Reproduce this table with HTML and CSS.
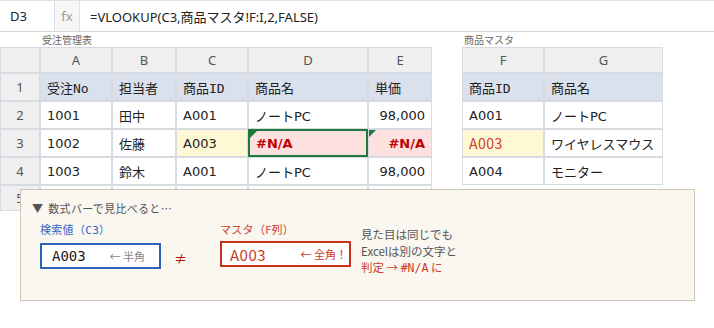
FILE: index.html
```html
<!DOCTYPE html>
<html lang="ja">
<head>
<meta charset="utf-8">
<link rel="stylesheet" href="styles.css">
</head>
<body>
<div class="formula-bar">
  <div class="namebox">D3</div>
  <div class="fx">fx</div>
  <div class="formula">=VLOOKUP(C3,商品マスタ!F:I,2,FALSE)</div>
</div>
<div class="sheets">
  <div class="sheet">
    <div class="caption caption-left">受注管理表</div>
    <div class="grid grid-left">
      <div class="cell corner"></div>
      <div class="cell colhdr">A</div>
      <div class="cell colhdr">B</div>
      <div class="cell colhdr">C</div>
      <div class="cell colhdr">D</div>
      <div class="cell colhdr">E</div>

      <div class="cell rowhdr">1</div>
      <div class="cell head"><span class="mono">受注No</span></div>
      <div class="cell head">担当者</div>
      <div class="cell head"><span class="mono">商品ID</span></div>
      <div class="cell head">商品名</div>
      <div class="cell head">単価</div>

      <div class="cell rowhdr">2</div>
      <div class="cell">1001</div>
      <div class="cell">田中</div>
      <div class="cell">A001</div>
      <div class="cell">ノートPC</div>
      <div class="cell num">98,000</div>

      <div class="cell rowhdr">3</div>
      <div class="cell">1002</div>
      <div class="cell">佐藤</div>
      <div class="cell lookup">A003</div>
      <div class="cell error active">#N/A<span class="sel"></span><span class="tri tri-big"></span></div>
      <div class="cell error num">#N/A<span class="tri"></span></div>

      <div class="cell rowhdr">4</div>
      <div class="cell">1003</div>
      <div class="cell">鈴木</div>
      <div class="cell">A001</div>
      <div class="cell">ノートPC</div>
      <div class="cell num">98,000</div>

      <div class="cell rowhdr">5</div>
      <div class="cell"></div>
      <div class="cell"></div>
      <div class="cell"></div>
      <div class="cell"></div>
      <div class="cell"></div>
    </div>
  </div>
  <div class="sheet sheet-right">
    <div class="caption caption-right">商品マスタ</div>
    <div class="grid grid-right">
      <div class="cell colhdr">F</div>
      <div class="cell colhdr">G</div>

      <div class="cell head"><span class="mono">商品ID</span></div>
      <div class="cell head">商品名</div>

      <div class="cell">A001</div>
      <div class="cell">ノートPC</div>

      <div class="cell lookup fullwidth">A003</div>
      <div class="cell">ワイヤレスマウス</div>

      <div class="cell">A004</div>
      <div class="cell">モニター</div>
    </div>
  </div>
</div>

<div class="note">
  <div class="note-title"><span class="arrow">▼</span>数式バーで見比べると…</div>
  <div class="compare">
    <div class="side side-half">
      <div class="side-label label-blue">検索値（<span class="mono">C3</span>）</div>
      <div class="side-box box-blue">
        <span class="val val-half">A003</span>
        <span class="hint hint-gray">← 半角</span>
      </div>
    </div>
    <div class="neq">≠</div>
    <div class="side side-full">
      <div class="side-label label-red">マスタ（F列）</div>
      <div class="side-box box-red">
        <span class="val val-full">A003</span>
        <span class="hint hint-red">← 全角！</span>
      </div>
    </div>
    <div class="explain">
      <div>見た目は同じでも</div>
      <div>Excelは別の文字と</div>
      <div class="explain-red">判定 → <span class="mono">#N/A</span> に</div>
    </div>
  </div>
</div>
</body>
</html>
```
FILE: styles.css
```css
* { box-sizing: border-box; }
html, body { margin: 0; padding: 0; background: #ffffff; }
body {
  width: 714px;
  height: 328px;
  overflow: hidden;
  position: relative;
  font-family: "DejaVu Sans", "Noto Sans CJK JP", sans-serif;
  color: #222;
}

.formula-bar {
  display: flex;
  height: 32px;
  border-top: 1px solid #dde1e6;
  border-bottom: 1px solid #d3d7dd;
  font-family: "Noto Sans", "Noto Sans CJK JP", sans-serif;
  font-size: 13px;
}
.namebox {
  width: 55px;
  border-right: 1px solid #dde1e6;
  padding-left: 10px;
  display: flex;
  align-items: center;
  color: #222;
}
.fx {
  width: 25px;
  border-right: 1px solid #dde1e6;
  background: #f6f6f6;
  color: #999;
  display: flex;
  align-items: center;
  justify-content: center;
}
.formula {
  padding-left: 10px;
  display: flex;
  align-items: center;
  color: #222;
}

.sheets { display: flex; }
.sheet { display: flex; flex-direction: column; }
.sheet-right { margin-left: 30px; }

.caption {
  height: 15px;
  font-family: "Noto Sans CJK JP", sans-serif;
  font-size: 10px;
  line-height: 15px;
  color: #666;
}
.caption-left { padding-left: 42px; }
.caption-right { padding-left: 2px; }

.grid {
  display: grid;
  gap: 2px;
  padding: 1px;
  background: #d6dbe2;
}
.grid-left {
  grid-template-columns: 38px 70px 62px 70px 118px 62px;
  grid-template-rows: 24px 26px 26px 26px 26px 24px;
}
.grid-right {
  grid-template-columns: 80px 117px;
  grid-template-rows: 24px 26px 26px 26px 26px;
}

.cell {
  position: relative;
  background: #fff;
  display: flex;
  align-items: center;
  padding: 0 6px;
  font-size: 13px;
  white-space: nowrap;
}
.corner, .colhdr, .rowhdr {
  background: #efefef;
  color: #555;
  justify-content: center;
  font-family: "Noto Sans", sans-serif;
}
.head { background: #dbe1ec; }
.mono { font-family: "DejaVu Sans Mono", "Noto Sans CJK JP", monospace; }
.num { justify-content: flex-end; }
.lookup { background: #fff8d4; }
.fullwidth {
  color: #d0392b;
  font-family: "Noto Sans CJK JP", sans-serif;
  font-size: 14px;
  letter-spacing: 0.5px;
}
.error {
  background: #fde0e0;
  color: #c00000;
  font-weight: bold;
}
.active { padding-left: 7px; }
.sel {
  position: absolute;
  left: -1px;
  top: -1px;
  right: -1px;
  bottom: -1px;
  border: 2px solid #1e7a3c;
  z-index: 1;
}
.tri {
  position: absolute;
  left: 0;
  top: 0;
  width: 0;
  height: 0;
  border-top: 7px solid #1e7a3c;
  border-right: 7px solid transparent;
  z-index: 2;
}
.tri-big {
  left: 1px;
  top: 1px;
  border-top-width: 7px;
  border-right-width: 7px;
}

.note {
  position: absolute;
  left: 20px;
  top: 189px;
  width: 675px;
  height: 112px;
  background: #faf7f1;
  border: 1px solid #cfc6b6;
  padding: 10px 0 0 11px;
  font-family: "Noto Sans CJK JP", sans-serif;
}
.note-title {
  font-size: 11px;
  line-height: 16px;
  color: #555;
  letter-spacing: 0.3px;
}
.arrow { margin-right: 5px; }
.compare {
  display: flex;
  align-items: flex-start;
  margin-left: 8px;
  margin-top: 6px;
}
.side { display: flex; flex-direction: column; gap: 5px; }
.side-half { width: 121px; }
.side-full { width: 131px; }
.side-label { font-size: 11px; line-height: 14px; letter-spacing: 0.3px; }
.label-blue { color: #2d67c4; }
.label-red { color: #cc3a2a; }
.side-box {
  height: 26px;
  background: #fff;
  display: flex;
  align-items: center;
  justify-content: space-between;
}
.box-blue { border: 2px solid #2c62b8; padding: 0 14px 0 10px; }
.box-red { border: 2px solid #c8321f; padding: 0 2px 0 8px; }
.val-half {
  font-family: "DejaVu Sans Mono", monospace;
  font-size: 14px;
  color: #222;
}
.val-full {
  font-family: "Noto Sans CJK JP", sans-serif;
  font-size: 15px;
  color: #cc3a2a;
  letter-spacing: 0.5px;
}
.hint { font-size: 11px; }
.hint-gray { color: #888; }
.hint-red { color: #cc3a2a; }
.neq {
  width: 59px;
  padding-top: 26px;
  padding-left: 13px;
  font-size: 13px;
  color: #b01010;
}
.explain {
  margin-left: 10px;
  margin-top: 4px;
  font-size: 11.5px;
  line-height: 16.5px;
  color: #555;
}
.explain-red { color: #cc3a2a; }
```
